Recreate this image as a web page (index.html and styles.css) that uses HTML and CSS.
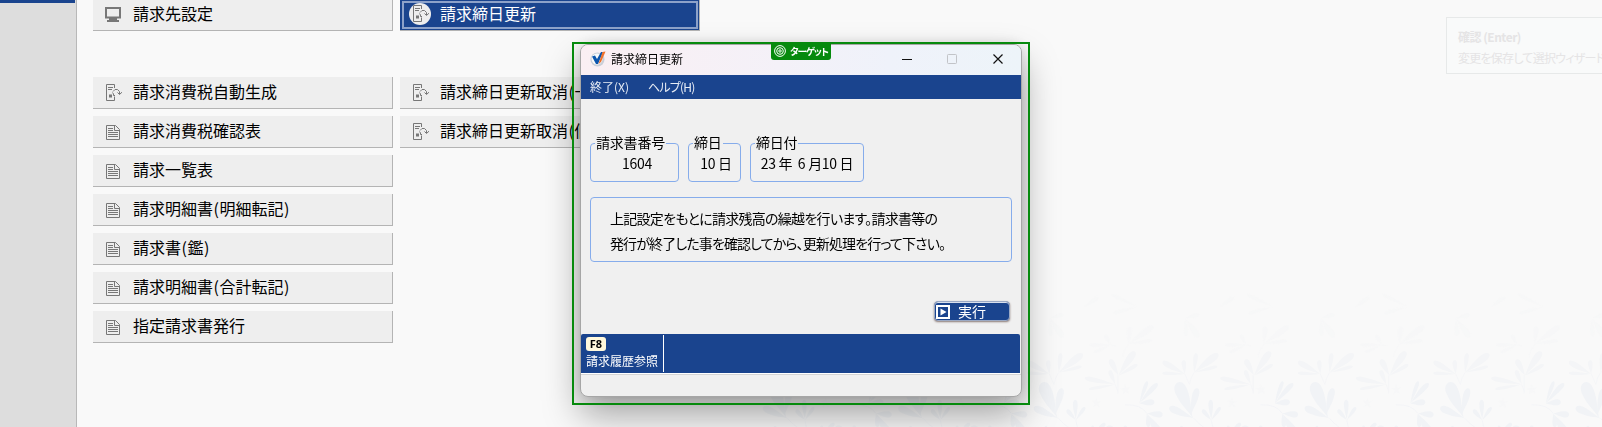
FILE: index.html
```
<!DOCTYPE html>
<html lang="ja">
<head>
<meta charset="utf-8">
<title>請求締日更新</title>
<link rel="stylesheet" href="styles.css">
</head>
<body>
<svg class="defs" width="0" height="0">
  <defs>
    <symbol id="doc" viewBox="0 0 16 16"><path d="M1.5 1.5H10.5L14.5 5.5V15.5H1.5ZM9.5 1.5V6.5H14.5M3 4.5H8M3 6.500H8M3 8.500H13M3 10.500H13M3 12.500H13" /></symbol>
    <symbol id="gen" viewBox="0 0 17 17"><path d="M9.500 4V.5H1.500V16.500H9.500V12.500M3 3.500H8M3 5.500H7M10 11.500H8.500V10L7.500 8.500M8 7.500L10 5.500H12.500L14.500 7.500V10M12.500 8.500L14.500 10.500L17 8.200"/><path class="solid" d="M4 10.500h3v3H4z"/></symbol>
    <path id="leaf" d="M0 0C22-4 40-20 78-21C106-19 108 14 86 19C56 24 24 5 0 0Z"/>
    <g id="plants">
      <g opacity="1">
        <use href="#leaf" transform="translate(426 468) rotate(-113) scale(1.06 .85)"/>
        <use href="#leaf" transform="translate(420 462) rotate(-76) scale(.78 .46)"/>
        <use href="#leaf" transform="translate(430 470) rotate(-156) scale(.75 .5)"/>
        <use href="#leaf" transform="translate(478 475) rotate(-130) scale(.38 .3)"/>
        <use href="#leaf" transform="translate(478 473) rotate(-92) scale(.55 .32)"/>
        <use href="#leaf" transform="translate(478 475) rotate(-55) scale(.44 .25)"/>
        <use href="#leaf" transform="translate(655 428) rotate(-70) scale(.65 .27)"/>
        <use href="#leaf" transform="translate(655 428) rotate(-48) scale(.75 .36)"/>
        <use href="#leaf" transform="translate(655 428) rotate(-5) scale(.42 .4)"/>
        <use href="#leaf" transform="translate(676 456) rotate(5) scale(.44 .42)"/>
        <use href="#leaf" transform="translate(676 456) rotate(82) scale(.38 .3)"/>
        <use href="#leaf" transform="translate(676 456) rotate(58) scale(.78 .55)"/>
        <use href="#leaf" transform="translate(625 560) rotate(-133) scale(.9 .75)"/>
        <use href="#leaf" transform="translate(612 540) rotate(-85) scale(.5 .32)"/>
        <use href="#leaf" transform="translate(385 550) rotate(-50) scale(.7 .4)"/>
        <use href="#leaf" transform="translate(385 550) rotate(-80) scale(.6 .3)"/>
        <use href="#leaf" transform="translate(530 513) rotate(-45) scale(.42 .28)"/>
        <use href="#leaf" transform="translate(530 513) rotate(-105) scale(.24 .2)"/>
        <use href="#leaf" transform="translate(530 513) rotate(5) scale(.3 .2)"/>
        <path class="stem" d="M430 470Q455 500 490 510M478 475Q480 495 490 510M615 432Q660 430 676 456M500 518L530 513"/>
      </g>
      <g opacity=".6">
        <use href="#leaf" transform="translate(404 346) rotate(-151) scale(.7 .38)"/>
        <use href="#leaf" transform="translate(404 346) rotate(182) scale(.62 .22)"/>
        <use href="#leaf" transform="translate(404 346) rotate(-95) scale(.38 .3)"/>
        <use href="#leaf" transform="translate(430 342) rotate(-84) scale(.54 .3)"/>
        <use href="#leaf" transform="translate(430 342) rotate(-38) scale(.84 .48)"/>
        <use href="#leaf" transform="translate(430 342) rotate(-15) scale(.66 .22)"/>
        <use href="#leaf" transform="translate(597 350) rotate(-118) scale(.5 .38)"/>
        <use href="#leaf" transform="translate(597 350) rotate(-56) scale(.8 .48)"/>
        <use href="#leaf" transform="translate(597 350) rotate(-30) scale(.6 .25)"/>
        <use href="#leaf" transform="translate(588 375) rotate(-168) scale(.86 .32)"/>
        <use href="#leaf" transform="translate(588 375) rotate(170) scale(.74 .22)"/>
        <use href="#leaf" transform="translate(588 375) rotate(-112) scale(.42 .3)"/>
        <path class="stem" d="M404 346L417 375Q420 355 430 342M595 400V350M588 375L595 395"/>
      </g>
      <g opacity=".25">
        <path d="M535 412l4 11l12-2l-11 7l5 12l-10-7l-10 6l6-10l-8-8h10ZM615 374l5 11l10-2l-8 8l5 10l-10-5l-9 7l3-11l-9-6l11-1Z"/>
        <use href="#leaf" transform="translate(625 262) rotate(-86) scale(.48 .35)"/>
        <use href="#leaf" transform="translate(625 262) rotate(-36) scale(.84 .42)"/>
        <use href="#leaf" transform="translate(625 262) rotate(-8) scale(.65 .22)"/>
        <use href="#leaf" transform="translate(575 265) rotate(-180) scale(.58 .25)"/>
        <use href="#leaf" transform="translate(575 265) rotate(155) scale(.5 .22)"/>
        <use href="#leaf" transform="translate(575 265) rotate(-118) scale(.32 .25)"/>
        <path class="stem" d="M608 300Q610 280 625 262M575 265L590 268"/>
      </g>
      <g opacity=".14">
        <use href="#leaf" transform="translate(405 190) rotate(55) scale(.65 .45)"/>
        <use href="#leaf" transform="translate(405 190) rotate(87) scale(.5 .3)"/>
        <use href="#leaf" transform="translate(405 190) rotate(-15) scale(.4 .3)"/>
        <use href="#leaf" transform="translate(650 158) rotate(-155) scale(.8 .25)"/>
        <use href="#leaf" transform="translate(650 158) rotate(165) scale(.7 .25)"/>
        <use href="#leaf" transform="translate(500 160) rotate(-35) scale(.5 .3)"/>
      </g>
    </g>
  </defs>
</svg>
<div class="app">
  <aside class="side"><div class="side-top"></div></aside>
  <main class="main">
    <ul class="menu">
      <li class="item first"><svg class="icon" viewBox="0 0 16 16"><path class="solid" d="M0 0H16V11.500H0ZM2 2V9.500H14V2ZM4 11.500H12V13H14V15H2V13H4Z" fill-rule="evenodd"/></svg><span>請求先設定</span></li>
      <li class="gap"></li>
      <li class="item"><svg class="icon gen"><use href="#gen"/></svg><span>請求消費税自動生成</span></li>
      <li class="item"><svg class="icon"><use href="#doc"/></svg><span>請求消費税確認表</span></li>
      <li class="item"><svg class="icon"><use href="#doc"/></svg><span>請求一覧表</span></li>
      <li class="item"><svg class="icon"><use href="#doc"/></svg><span>請求明細書<i>(</i>明細転記<i>)</i></span></li>
      <li class="item"><svg class="icon"><use href="#doc"/></svg><span>請求書<i>(</i>鑑<i>)</i></span></li>
      <li class="item"><svg class="icon"><use href="#doc"/></svg><span>請求明細書<i>(</i>合計転記<i>)</i></span></li>
      <li class="item"><svg class="icon"><use href="#doc"/></svg><span>指定請求書発行</span></li>
    </ul>
    <ul class="menu">
      <li class="item first selected"><div class="disc"><svg class="icon gen"><use href="#gen"/></svg></div><span>請求締日更新</span></li>
      <li class="gap"></li>
      <li class="item"><svg class="icon gen"><use href="#gen"/></svg><span>請求締日更新取消<i>(</i>一</span></li>
      <li class="item"><svg class="icon gen"><use href="#gen"/></svg><span>請求締日更新取消<i>(</i>個</span></li>
    </ul>
  </main>
</div>
<svg class="foliage" viewBox="0 0 902 177">
  <g transform="translate(340 0) scale(.3584)">
    <use href="#plants" x="-1134"/><use href="#plants" x="-756"/><use href="#plants" x="-378"/><use href="#plants"/><use href="#plants" x="378"/><use href="#plants" x="756"/><use href="#plants" x="1134"/>
  </g>
</svg>
<div class="toast"><b>確認 (Enter)</b><span>変更を保存して選択ウィザードを</span></div>

<section class="dialog">
  <header class="title">
    <svg class="logo" viewBox="0 0 16 16"><circle cx="7.500" cy="8.500" r="7" fill="#c9ced8"/><circle cx="7" cy="8" r="5.500" fill="#f7f8fa"/><path d="M2 5.500L5 4.500L7 8L11 1L13 1L8 13H6Z" fill="#0c55ae"/><path d="M12.500 1L15.500 .5L11 11L8.500 13Z" fill="#f0712c"/></svg>
    <span class="caption">請求締日更新</span>
    <svg class="controls" viewBox="0 0 102 12"><path d="M0 6.500H10" stroke="#111"/><rect x="45.500" y="1.500" width="9" height="9" rx=".8" fill="none" stroke="#c2c4c8"/><path d="M91.500 1.500L100.500 10.500M100.500 1.500L91.500 10.500" stroke="#111" stroke-width="1.200"/></svg>
  </header>
  <nav class="bar"><span class="m1">終了(X)</span><span class="m2">ヘルプ(H)</span></nav>
  <div class="body">
    <div class="fields">
      <div class="field f1"><span class="legend">請求書番号</span><span class="value">1604</span></div>
      <div class="field f2"><span class="legend">締日</span><span class="value">10 日</span></div>
      <div class="field f3"><span class="legend">締日付</span><span class="value">23 年&nbsp; 6 月10 日</span></div>
    </div>
    <div class="message"><p class="l1">上記設定をもとに請求残高の繰越を行います。請求書等の</p><p class="l2">発行が終了した事を確認してから、更新処理を行って下さい。</p></div>
    <div class="actions"><button class="run"><svg viewBox="0 0 14 14"><path d="M1 1H13V13H1Z" fill="#1a448e" stroke="#fff" stroke-width="2"/><path d="M4.500 3.500L10.500 7L4.500 10.500Z" fill="#fff"/></svg><span>実行</span></button></div>
  </div>
  <footer class="keys"><div class="key"><kbd>F8</kbd><span>請求履歴参照</span></div></footer>
  <div class="status"></div>
</section>
<div class="target"><div class="tag"><svg viewBox="0 0 12 12"><circle cx="6" cy="6" r="5.400"/><circle cx="6" cy="6" r="3.300"/><circle cx="6" cy="6" r="1.200"/></svg><span>ターゲット</span></div></div>
</body>
</html>
```
FILE: styles.css
```
* { box-sizing: border-box; }
body { margin: 0; width: 1602px; height: 427px; overflow: hidden; position: relative; background: #f9f9f9; color: #000; font-family: "Noto Sans CJK JP", sans-serif; }
.defs { position: absolute; }
.app { display: flex; height: 427px; }
.side { width: 77px; background: #ddd; border-right: 1px solid #b8b8b8; }
.side-top { width: 75px; height: 3px; background: #1a448e; }
.main { display: flex; gap: 7px; padding-left: 16px; }
.menu { list-style: none; margin: 0; padding: 0; width: 300px; display: flex; flex-direction: column; gap: 7px; }
.item { height: 32px; display: flex; align-items: center; background: #eee; border-right: 1px solid #b4b4b4; border-bottom: 1px solid #b4b4b4; padding: 0 0 2px 12px; font-size: 16px; line-height: 24px; white-space: nowrap; }
.item > span { margin-top: -2px; }
.item i { display: inline-block; font-style: normal; width: 6.500px; text-align: center; }
.first { height: 31px; }
.gap { height: 32px; }
.icon { width: 16px; height: 16px; margin-right: 12px; position: relative; top: 1px; fill: none; stroke: #777; overflow: visible; flex: none; }
.icon .solid, .solid { fill: #777; stroke: none; }
.gen { width: 17px; height: 17px; margin-right: 11px; }
.selected { background: #1a448e; color: #fff; padding-left: 9px; position: relative; }
.selected::after { content: ""; position: absolute; inset: 1px 1px 1px 2px; border: 2px solid #8da2c9; }
.disc { width: 22px; height: 22px; border-radius: 50%; background: #eee; display: flex; margin-right: 9px; padding: 2px 0 0 3px; }
.disc .icon { margin: 0; top: 0; }
.foliage { position: absolute; left: 700px; top: 250px; width: 902px; height: 177px; fill: #f1f3f6; }
.stem { fill: none; stroke: #f1f3f6; stroke-width: 2; }
.toast { position: absolute; left: 1446px; top: 17px; width: 180px; height: 57px; border: 1px solid #e7e9e9; background: #f9fafa; color: #e5e4e5; padding: 8px 0 0 11px; font-size: 12px; line-height: 21px; display: flex; flex-direction: column; white-space: nowrap; font-feature-settings: "palt"; letter-spacing: -.75px; }
.toast b { letter-spacing: -.5px; }
.dialog { position: absolute; left: 580px; top: 44px; width: 442px; height: 353px; border: 1px solid #a6a6a6; border-radius: 8px; background: #f0f0f0; overflow: hidden; box-shadow: 0 18px 36px rgba(0,0,0,.35), 0 0 14px rgba(0,0,0,.14); display: flex; flex-direction: column; }
.title { height: 30px; display: flex; align-items: center; padding: 0 17px 2px 9px; background: linear-gradient(90deg, #faeff3, #f4f1f8 45%, #eff2fa 70%, #edf4f9); }
.logo { width: 16px; height: 16px; margin-right: 5px; }
.caption { font-size: 12px; line-height: 18px; flex: 1; }
.controls { width: 102px; height: 12px; position: relative; }
.bar { height: 24px; background: #1a448e; color: #e8edf5; font-size: 12px; line-height: 23px; padding-left: 9px; display: flex; font-feature-settings: "palt"; }
.m1 { width: 58px; }
.m2 { letter-spacing: -.8px; }
.body { height: 235px; padding: 44px 9px 0; }
.fields { display: flex; gap: 9px; height: 39px; }
.field { border: 1px solid #86aceb; border-radius: 4px; display: flex; flex-direction: column; }
.f1 { width: 89px; } .f2 { width: 53px; } .f3 { width: 114px; }
.legend { align-self: flex-start; margin: -11px 0 0 4px; padding: 0 1px; background: #f0f0f0; font-size: 14px; line-height: 18px; letter-spacing: -.2px; white-space: nowrap; }
.value { font-size: 14px; line-height: 20px; margin-top: 2px; white-space: pre; text-align: center; letter-spacing: -.3px; }
.f1 .value { padding-left: 5px; }
.f2 .value { padding-left: 3px; }
.message { margin-top: 15px; height: 65px; border: 1px solid #86aceb; border-radius: 4px; padding: 8px 0 0 19px; font-size: 14px; font-feature-settings: "palt"; }
.message p { margin: 0; line-height: 25px; white-space: nowrap; }
.l1 { letter-spacing: -.72px; }
.l2 { letter-spacing: -.88px; }
.actions { display: flex; justify-content: flex-end; margin: 39px 2px 0 0; }
.run { width: 76px; height: 20px; background: #1a448e; border: 1px solid #9ba9c4; border-radius: 4px; box-shadow: inset 0 1px #d9e0ed, 0 1px 2px #8a7a76; color: #fff; padding: 1px 0 0 1px; display: flex; align-items: center; gap: 8px; font: 14px/16px "Noto Sans CJK JP", sans-serif; }
.run span { margin-top: -2px; }
.run svg { width: 14px; height: 14px; }
.keys { height: 40px; background: #1a448e; border-bottom: 1px solid #fff; color: #fff; width: 439px; border-radius: 2px 2px 0 0; padding-top: 1px; }
.key { width: 83px; height: 37px; border-right: 1px solid #fff; padding: 2px 0 0 5px; display: flex; flex-direction: column; }
.key kbd { width: 20px; height: 14px; border-radius: 3px; background: #fff8dc; color: #000; font: bold 11px/14px "Noto Sans", sans-serif; text-align: center; }
.key span { font-size: 12px; line-height: 18px; margin-top: 1px; white-space: nowrap; }
.status { height: 22px; border-top: 1px solid #d5d5d5; }
.target { position: absolute; left: 572px; top: 42px; width: 458px; height: 363px; border: 2px solid #068a0d; }
.tag { margin: -2px 0 0 197px; width: 60px; height: 18px; background: #068a0d; border-radius: 0 0 3px 3px; color: #fff; display: flex; align-items: center; padding-left: 3px; gap: 4px; font-size: 9.500px; font-weight: 700; line-height: 16px; font-feature-settings: "palt"; white-space: nowrap; letter-spacing: -1px; }
.tag svg { width: 12px; height: 12px; fill: none; stroke: #fff; flex: none; }
```
